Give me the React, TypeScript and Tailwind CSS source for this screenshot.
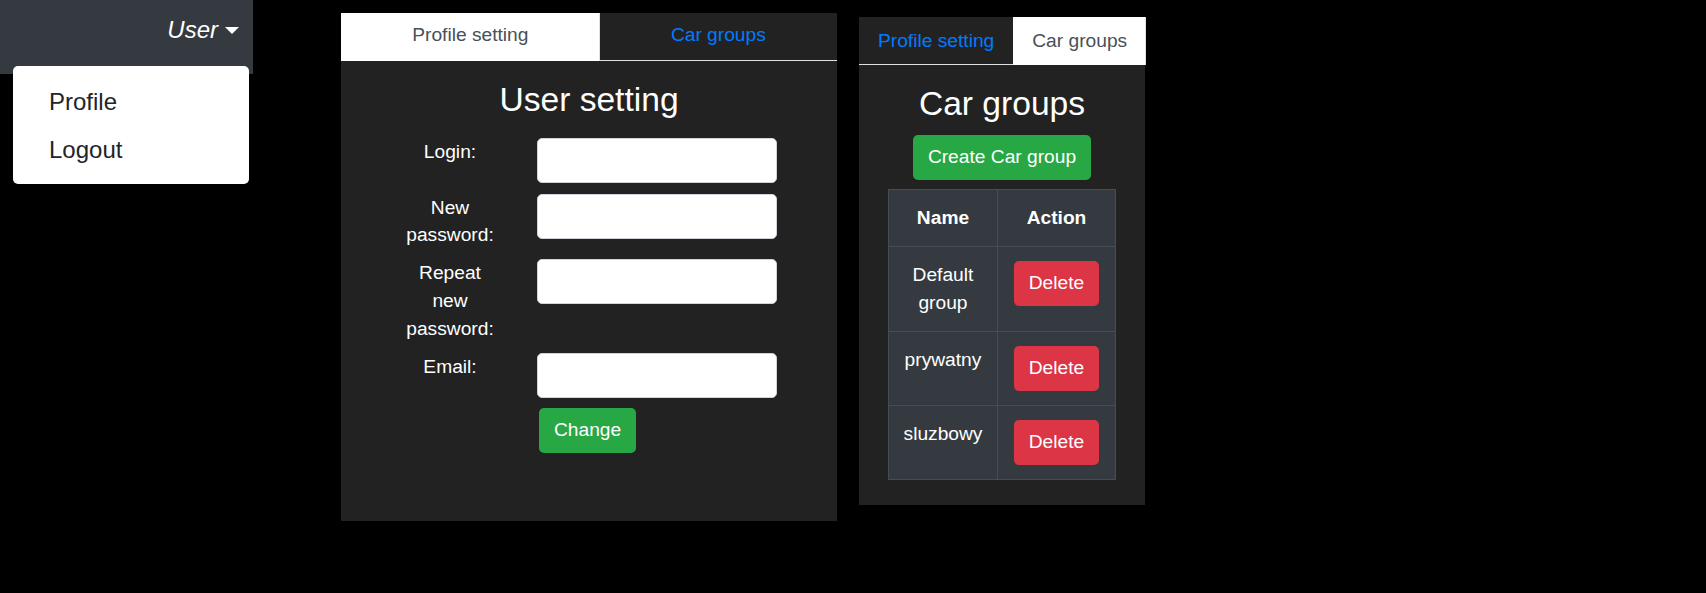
import React from 'react';

const font = "font-['Liberation_Sans',Arial,Helvetica,sans-serif]";

function Tabs({ active }: { active: 0 | 1 }) {
  const labels = ['Profile setting', 'Car groups'];
  const pad = active === 0 ? 'pt-[8px]' : 'pt-[10px]';
  return (
    <div className="flex h-[48px] whitespace-nowrap">
      {labels.map((label, i) =>
        i === active ? (
          <div
            key={label}
            className={`flex-auto bg-white px-[19px] ${pad} text-center text-[19.2px] leading-[28.8px] text-[#495057] shadow-[inset_-1px_0_0_#dee2e6]`}
          >
            {label}
          </div>
        ) : (
          <div
            key={label}
            className={`flex-auto border-b border-[#dee2e6] px-[19px] ${pad} text-center text-[19.2px] leading-[28.8px] text-[#007bff]`}
          >
            {label}
          </div>
        )
      )}
    </div>
  );
}

function FormRow({ label }: { label: string }) {
  return (
    <div className="flex items-start">
      <label className="w-[99px] text-center text-[19.2px] leading-[27.6px] text-white">{label}</label>
      <input
        type="text"
        className="ml-[37.5px] h-[45px] w-[240px] rounded-[5px] border border-[#ced4da] bg-white"
      />
    </div>
  );
}

function UserMenu() {
  return (
    <div className="relative h-[74px] w-[253px] shrink-0 bg-[#343a40]">
      <div className="flex items-center justify-end pr-[14px] pt-[12px] text-[24px] leading-[36px] text-white">
        <span className="italic">User</span>
        <span className="ml-[7px] inline-block h-0 w-0 border-x-[7px] border-t-[7px] border-x-transparent border-t-white" />
      </div>
      <div className="absolute left-[13px] top-[66px] w-[236px] rounded-[5px] bg-white pb-[11px] pt-[12px] text-[24px] leading-[47.5px] text-[#212529]">
        <div className="px-[36px]">Profile</div>
        <div className="px-[36px]">Logout</div>
      </div>
    </div>
  );
}

function ProfilePanel() {
  return (
    <div className="ml-[88px] mt-[13px] h-[508px] w-[496px] shrink-0 bg-[#222222]">
      <Tabs active={0} />
      <h3 className="mt-[19px] text-center text-[33.6px] leading-[40.3px] text-white">User setting</h3>
      <div className="mx-auto mt-[18px] flex w-[377px] flex-col gap-[10.5px]">
        <FormRow label="Login:" />
        <FormRow label="New password:" />
        <FormRow label="Repeat new password:" />
        <FormRow label="Email:" />
        <div className="flex">
          <button className="ml-[138.5px] h-[45px] rounded-[5px] bg-[#28a745] px-[15px] text-[19.2px] text-white">
            Change
          </button>
        </div>
      </div>
    </div>
  );
}

const groups = ['Default group', 'prywatny', 'sluzbowy'];

function CarGroupsPanel() {
  return (
    <div className="ml-[22px] mt-[17px] w-[286px] shrink-0 bg-[#222222] pb-[25px]">
      <Tabs active={1} />
      <h3 className="mt-[19px] text-center text-[33.6px] leading-[40.3px] text-white">Car groups</h3>
      <div className="mt-[11px] flex justify-center">
        <button className="h-[45px] rounded-[5px] bg-[#28a745] px-[14.4px] text-[19.2px] text-white">
          Create Car group
        </button>
      </div>
      <table className="mx-auto mt-[9px] w-[227px] table-fixed border-collapse bg-[#343a40] text-center text-[19.2px] leading-[28px] text-white">
        <colgroup>
          <col className="w-[109px]" />
          <col className="w-[118px]" />
        </colgroup>
        <thead>
          <tr>
            <th className="border border-[#454d55] p-[14px] align-top font-bold">Name</th>
            <th className="border border-[#454d55] p-[14px] align-top font-bold">Action</th>
          </tr>
        </thead>
        <tbody>
          {groups.map((g) => (
            <tr key={g}>
              <td className="border border-[#454d55] p-[14px] align-top">{g}</td>
              <td className="border border-[#454d55] p-[14px] align-top">
                <button className="h-[45px] rounded-[5px] bg-[#dc3545] px-[14.4px] text-[19.2px] leading-[28.8px] text-white">
                  Delete
                </button>
              </td>
            </tr>
          ))}
        </tbody>
      </table>
    </div>
  );
}

export default function App() {
  return (
    <div className={`flex h-[593px] items-start bg-black ${font}`}>
      <UserMenu />
      <ProfilePanel />
      <CarGroupsPanel />
    </div>
  );
}
